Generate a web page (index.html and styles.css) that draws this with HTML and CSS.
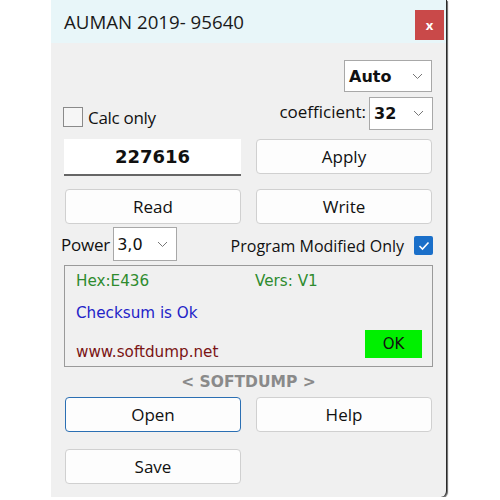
FILE: index.html
```html
<!DOCTYPE html>
<html>
<head>
<meta charset="utf-8">
<link rel="stylesheet" href="styles.css">
</head>
<body>
<div class="window">
  <div class="titlebar">
    <span class="title">AUMAN 2019- 95640</span>
    <span class="close">x</span>
  </div>
  <div class="content">
    <div class="row row-auto">
      <div class="combo combo-auto"><span class="val">Auto</span><svg class="chev" width="11" height="7" viewBox="0 0 11 7"><polyline points="1,1 5.5,5.5 10,1" fill="none" stroke="#777" stroke-width="1"/></svg></div>
    </div>
    <div class="row row-coef">
      <label class="check"><span class="box"></span><span class="lbl">Calc only</span></label>
      <div class="coef">
        <span class="coef-lbl">coefficient:</span>
        <div class="combo combo-32"><span class="val">32</span><svg class="chev" width="11" height="7" viewBox="0 0 11 7"><polyline points="1,1 5.5,5.5 10,1" fill="none" stroke="#777" stroke-width="1"/></svg></div>
      </div>
    </div>
    <div class="row row-field">
      <div class="field">227616</div>
      <div class="btn">Apply</div>
    </div>
    <div class="row row-rw">
      <div class="btn">Read</div>
      <div class="btn">Write</div>
    </div>
    <div class="row row-power">
      <div class="power">
        <span class="power-lbl">Power</span>
        <div class="combo combo-power"><span class="val">3,0</span><svg class="chev" width="11" height="7" viewBox="0 0 11 7"><polyline points="1,1 5.5,5.5 10,1" fill="none" stroke="#777" stroke-width="1"/></svg></div>
      </div>
      <div class="pmo">
        <span class="pmo-lbl">Program Modified Only</span>
        <span class="cbox"><svg width="12" height="10" viewBox="0 0 12 10"><polyline points="1.5,5 4.5,8 10.5,1.5" fill="none" stroke="#fff" stroke-width="1.6"/></svg></span>
      </div>
    </div>
    <div class="group">
      <div class="g-row g1">
        <span class="hex">Hex:E436</span>
        <span class="vers">Vers: V1</span>
      </div>
      <div class="g-row g2"><span class="chk">Checksum is Ok</span></div>
      <div class="g-row g3">
        <span class="web">www.softdump.net</span>
        <span class="ok">OK</span>
      </div>
    </div>
    <div class="brand">&lt; SOFTDUMP &gt;</div>
    <div class="row row-oh">
      <div class="btn btn-focus">Open</div>
      <div class="btn">Help</div>
    </div>
    <div class="row row-save">
      <div class="btn">Save</div>
      <div class="spacer"></div>
    </div>
  </div>
</div>
</body>
</html>
```
FILE: styles.css
```css
html, body {
  margin: 0;
  padding: 0;
  background: #ffffff;
}
body {
  font-family: "Open Sans", "Noto Sans", sans-serif;
  color: #111;
}
.window {
  margin-left: 51px;
  width: 395px;
  height: 497px;
  background: #f0f0f0;
  border-right: 1px solid #2a2a2a;
  border-bottom-right-radius: 6px;
  box-shadow: 1px 1px 1px rgba(0,0,0,0.6);
  overflow: hidden;
}
.titlebar {
  height: 43px;
  background: #e8f6f9;
  display: flex;
  align-items: center;
  justify-content: space-between;
  padding-left: 13px;
  padding-right: 2px;
}
.title {
  font-size: 18.7px;
  color: #1a1a1a;
}
.close {
  width: 29px;
  height: 30px;
  background: #c94949;
  color: #fff;
  font-weight: bold;
  font-size: 13px;
  display: flex;
  align-items: center;
  justify-content: center;
  margin-top: 6px;
}
.content {
  padding: 0 13px 0 13px;
}
.row {
  display: flex;
  justify-content: space-between;
  align-items: center;
}
.combo {
  background: #fff;
  border: 1px solid #a8a8a8;
  display: flex;
  align-items: center;
  justify-content: space-between;
  padding: 0 8px 0 4px;
  box-sizing: border-box;
}
.combo .val {
  font-family: "DejaVu Sans", sans-serif;
  font-weight: bold;
  font-size: 16px;
}
.row-auto {
  justify-content: flex-end;
  margin-top: 17px;
  padding-right: 1px;
}
.combo-auto {
  width: 88px;
  height: 32px;
}
.row-coef {
  margin-top: 5px;
  height: 32px;
}
.check {
  display: flex;
  align-items: center;
  margin-top: 8px;
  margin-left: -1px;
}
.box {
  width: 18px;
  height: 18px;
  border: 1px solid #8a8a8a;
  background: #f6f6f6;
  margin-right: 5px;
}
.lbl {
  font-size: 17px;
  letter-spacing: -0.3px;
}
.coef {
  display: flex;
  align-items: center;
}
.coef-lbl {
  font-size: 17px;
  margin-right: 3px;
  margin-top: -3px;
}
.combo-32 {
  width: 64px;
  height: 33px;
}
.row-field {
  margin-top: 10px;
  align-items: flex-start;
}
.field {
  width: 177px;
  height: 37px;
  background: #fff;
  border-bottom: 2px solid #666;
  box-sizing: border-box;
  display: flex;
  align-items: center;
  justify-content: center;
  font-family: "DejaVu Sans", sans-serif;
  font-weight: bold;
  font-size: 18px;
}
.btn {
  width: 176px;
  height: 35px;
  background: #fdfdfd;
  border: 1px solid #d0d0d0;
  border-radius: 4px;
  box-sizing: border-box;
  display: flex;
  align-items: center;
  justify-content: center;
  font-size: 17px;
}
.row-field .btn {
  margin-right: 1px;
}
.row-rw {
  margin-top: 13px;
  padding-left: 1px;
  padding-right: 1px;
}
.row-power {
  margin-top: 3px;
  height: 34px;
}
.power {
  display: flex;
  align-items: center;
  margin-left: -3px;
}
.power-lbl {
  font-size: 17px;
  margin-right: 3px;
  letter-spacing: -0.2px;
}
.combo-power {
  width: 64px;
  height: 34px;
  padding-left: 3px;
}
.combo-power .val {
  font-weight: normal;
  font-size: 16px;
}
.pmo {
  display: flex;
  align-items: center;
  margin-top: 3px;
}
.pmo-lbl {
  font-size: 16px;
  margin-right: 10px;
}
.cbox {
  width: 19px;
  height: 19px;
  background: #1a6fc9;
  border-radius: 2px;
  display: flex;
  align-items: center;
  justify-content: center;
}
.group {
  margin-top: 4px;
  height: 102px;
  border: 1px solid #9a9a9a;
  box-sizing: border-box;
  padding: 0 10px 0 11px;
  font-family: "DejaVu Sans", sans-serif;
  font-size: 15.2px;
}
.g-row {
  display: flex;
  align-items: center;
}
.g1 {
  height: 28px;
  margin-top: 1px;
}
.hex {
  color: #2e8b2e;
  width: 179px;
}
.vers {
  color: #2e8b2e;
}
.g2 {
  height: 35px;
}
.chk {
  color: #2323c8;
}
.g3 {
  height: 34px;
  justify-content: space-between;
}
.web {
  color: #7a1414;
  margin-top: 10px;
}
.ok {
  width: 57px;
  height: 28px;
  background: #00f000;
  display: flex;
  align-items: center;
  justify-content: center;
  font-size: 15px;
  margin-top: -6px;
}
.brand {
  text-align: center;
  color: #8a8a8a;
  font-weight: bold;
  font-size: 15.5px;
  font-family: "DejaVu Sans", sans-serif;
  height: 28px;
  line-height: 28px;
  margin-top: 1px;
}
.row-oh {
  margin-top: 1px;
  padding-left: 1px;
  padding-right: 1px;
}
.btn-focus {
  border: 1.5px solid #2b6fb3;
}
.row-save {
  margin-top: 17px;
  padding-left: 1px;
  padding-right: 1px;
}
.spacer {
  width: 176px;
}
```
